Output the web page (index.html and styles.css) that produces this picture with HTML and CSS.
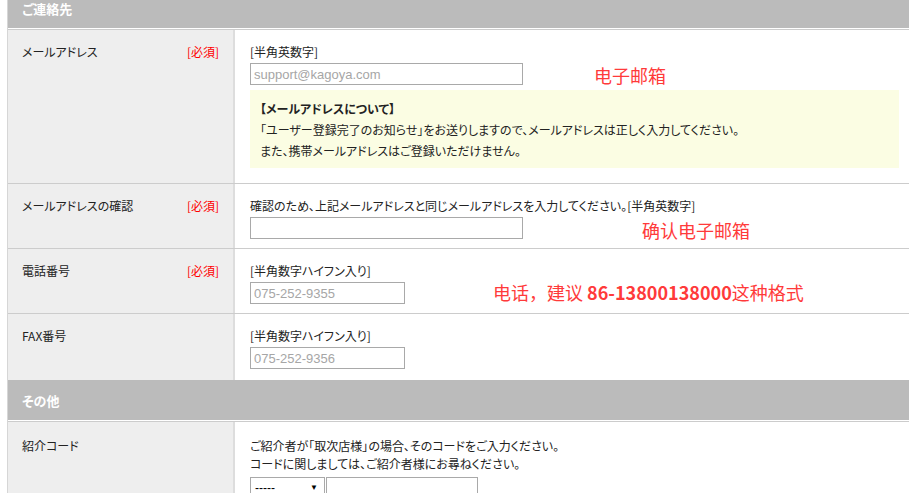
FILE: index.html
```html
<!DOCTYPE html>
<html lang="ja">
<head>
    <meta charset="UTF-8">
    <meta name="viewport" content="width=device-width, initial-scale=1.0">
    <title>ユーザー登録</title>
    <link rel="stylesheet" href="styles.css">
</head>
<body>
    <div class="form">
        <h2 class="section-title">ご連絡先</h2>
        <div class="rows">
            <div class="row row-mail">
                <div class="label"><span>メールアドレス</span><span class="req">[必須]</span></div>
                <div class="value">
                    <p class="hint">[半角英数字]</p>
                    <div class="field">
                        <input class="input input-long" type="text" placeholder="support@kagoya.com">
                        <span class="note note-mail">电子邮箱</span>
                    </div>
                    <div class="notice">
                        <p class="notice-title">【メールアドレスについて】</p>
                        <p>「ユーザー登録完了のお知らせ」をお送りしますので、メールアドレスは正しく入力してください。</p>
                        <p>また、携帯メールアドレスはご登録いただけません。</p>
                    </div>
                </div>
            </div>
            <div class="row">
                <div class="label"><span>メールアドレスの確認</span><span class="req">[必須]</span></div>
                <div class="value">
                    <p class="hint">確認のため、上記メールアドレスと同じメールアドレスを入力してください。[半角英数字]</p>
                    <div class="field">
                        <input class="input input-long" type="text">
                        <span class="note note-confirm">确认电子邮箱</span>
                    </div>
                </div>
            </div>
            <div class="row">
                <div class="label"><span>電話番号</span><span class="req">[必須]</span></div>
                <div class="value">
                    <p class="hint">[半角数字ハイフン入り]</p>
                    <div class="field">
                        <input class="input input-short" type="text" placeholder="075-252-9355">
                        <span class="note note-tel">电话，建议 <b>86-13800138000</b>这种格式</span>
                    </div>
                </div>
            </div>
            <div class="row row-fax">
                <div class="label"><span>FAX番号</span></div>
                <div class="value">
                    <p class="hint">[半角数字ハイフン入り]</p>
                    <div class="field">
                        <input class="input input-short" type="text" placeholder="075-252-9356">
                    </div>
                </div>
            </div>
        </div>

        <h2 class="section-title">その他</h2>
        <div class="rows">
            <div class="row row-code">
                <div class="label"><span>紹介コード</span></div>
                <div class="value">
                    <p>ご紹介者が「取次店様」の場合、そのコードをご入力ください。</p>
                    <p>コードに関しましては、ご紹介者様にお尋ねください。</p>
                    <div class="code-field">
                        <div class="select"><span>-----</span><span class="arrow">▼</span></div>
                        <input class="input input-code" type="text">
                    </div>
                </div>
            </div>
        </div>
    </div>
</body>
</html>
```

FILE: styles.css
```css
body {
    margin: 0;
    overflow: hidden;
    background-color: #fff;
    color: #222;
    font-family: "Noto Sans CJK JP", sans-serif;
    font-size: 12px;
    font-feature-settings: "palt";
}

p {
    margin: 0;
}

.form {
    width: 906px;
    margin: -12px 0 0 7px;
    border-left: 1px solid #d6d6d6;
}

.section-title {
    margin: 0;
    height: 40px;
    line-height: 42px;
    padding-left: 14px;
    background-color: #bbbbbb;
    border-bottom: 1px solid #fff;
    color: #fff;
    font-size: 13px;
    font-weight: bold;
    overflow: hidden;
}

.rows {
    border-top: 1px solid #cccccc;
}

.row {
    display: grid;
    grid-template-columns: 227px 1fr;
    border-bottom: 1px solid #cccccc;
}

.row:last-child {
    border-bottom: none;
}

.label {
    box-sizing: border-box;
    display: flex;
    justify-content: space-between;
    padding: 14px 14px 0;
    background-color: #eeeeee;
    border-right: 2px solid #dddddd;
    line-height: 16px;
}

.req {
    color: #ff0000;
}

.value {
    padding: 14px 15px 9px;
    line-height: 16px;
    color: #222;
}

.row-mail .value {
    padding-bottom: 15px;
}

.row-fax .value {
    padding-bottom: 11px;
}

.field {
    display: flex;
    align-items: center;
    height: 22px;
    margin-top: 3px;
}

.input {
    box-sizing: border-box;
    height: 22px;
    padding: 0 3px;
    border: 1px solid #a9a9a9;
    background-color: #fff;
    font-family: "Liberation Sans", Arial, sans-serif;
    font-size: 13px;
    color: #333;
}

.input::placeholder {
    color: #a6a6a6;
}

.input-long {
    width: 273px;
}

.input-short {
    width: 155px;
}

.note {
    font-family: "Noto Sans CJK SC", sans-serif;
    font-feature-settings: normal;
    font-size: 18px;
    line-height: 18px;
    color: #ff3a3a;
    white-space: nowrap;
}

.note b {
    font-weight: 600;
}

.note-mail {
    margin-left: 71px;
    margin-top: 2px;
}

.note-confirm {
    margin-left: 119px;
    margin-top: 4px;
}

.note-tel {
    margin-left: 88px;
    margin-bottom: 2px;
}

.notice {
    margin-top: 5px;
    padding: 8px 10px 7px;
    background-color: #fbfde3;
    line-height: 21px;
}

.notice-title {
    font-weight: bold;
}

.row-code .label,
.row-code .value {
    padding-top: 15px;
    line-height: 18px;
}

.code-field {
    display: flex;
    margin-top: 4px;
}

.select {
    box-sizing: border-box;
    width: 75px;
    height: 22px;
    display: flex;
    justify-content: space-between;
    align-items: center;
    padding: 0 6px 0 4px;
    border: 1px solid #a9a9a9;
    font-family: "Liberation Sans", Arial, sans-serif;
    font-size: 12px;
    color: #000;
}

.arrow {
    font-size: 8px;
}

.input-code {
    width: 152px;
    margin-left: 1px;
}
```
